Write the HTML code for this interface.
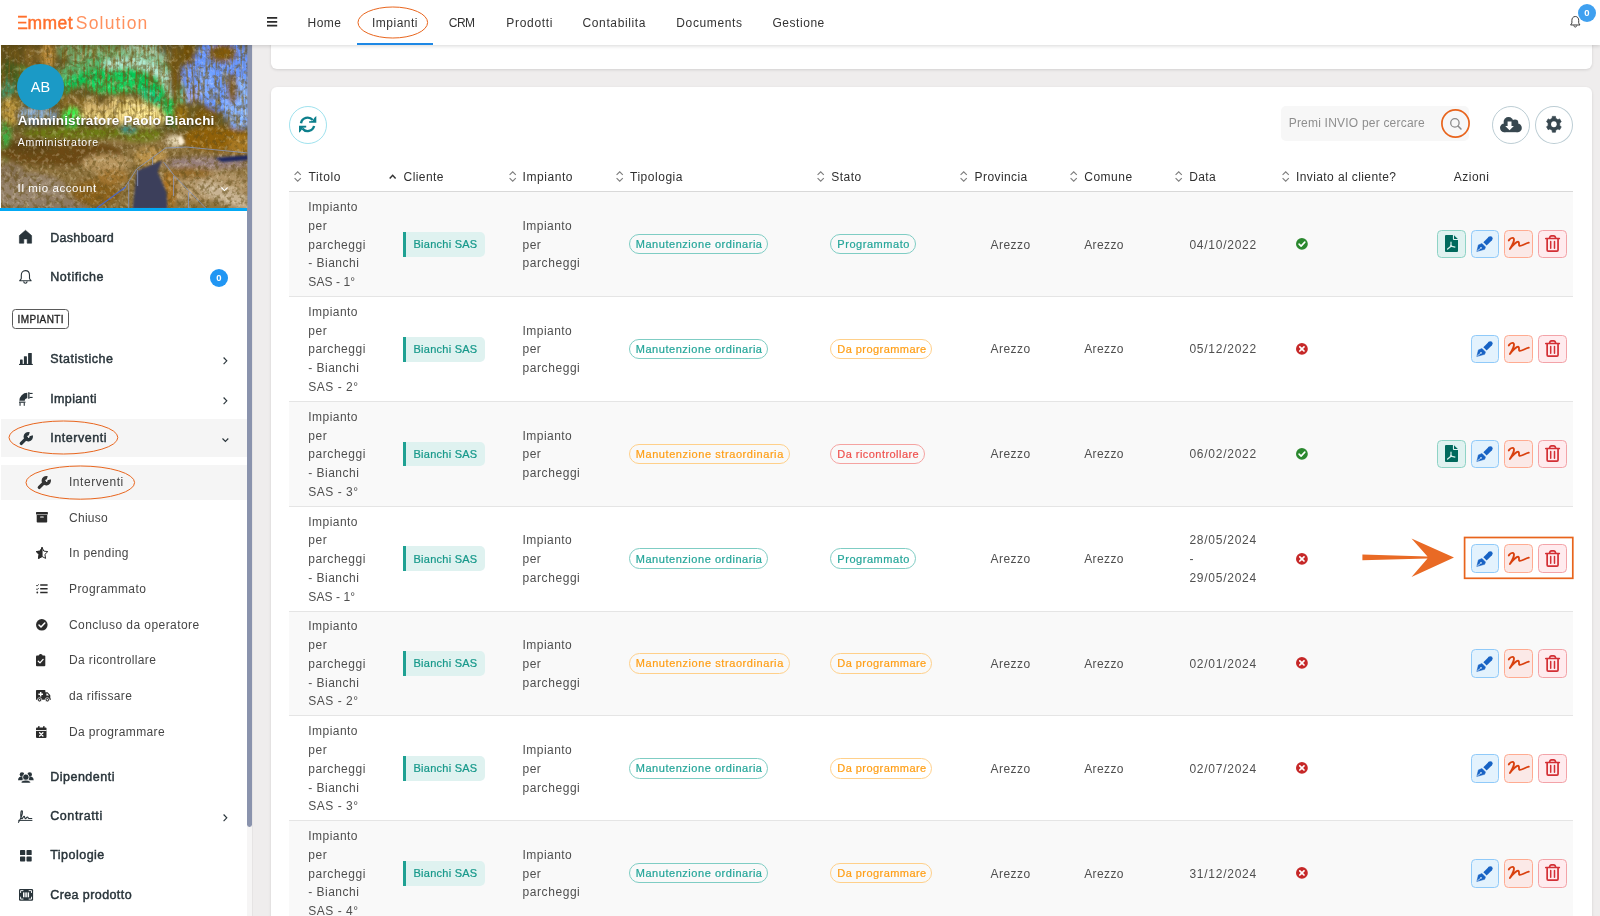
<!DOCTYPE html>
<html lang="it"><head><meta charset="utf-8"><title>Emmet Solution - Interventi</title>
<style>
html,body{margin:0;padding:0}
body{width:1600px;height:916px;overflow:hidden;position:relative;background:#efeded;font-family:"Liberation Sans", sans-serif;}
.t{position:absolute;white-space:nowrap;line-height:20px;height:20px;}
main,aside,header{display:block;will-change:transform;}
svg{position:absolute;overflow:visible}
.cave{filter:saturate(1.12) contrast(1.1) brightness(1.05)}
</style></head><body>
<main>
<div style="position:absolute;left:270.6px;top:30px;width:1321px;height:38.6px;background:#fff;border-radius:6px;box-shadow:0 1px 3px rgba(0,0,0,.12);"></div>
<div style="position:absolute;left:270.6px;top:86.8px;width:1321px;height:860px;background:#fff;border-radius:6px;box-shadow:0 1px 3px rgba(0,0,0,.12);"></div>
<div style="position:absolute;left:289.0px;top:191px;width:1284.0px;height:1px;background:#d9d9d9;"></div>
<div style="position:absolute;left:289.0px;top:192px;width:1284.0px;height:104px;background:#f9f9f9;"></div>
<div style="position:absolute;left:289.0px;top:296px;width:1284.0px;height:1px;background:#e5e5e5;"></div>
<div style="position:absolute;left:289.0px;top:401px;width:1284.0px;height:1px;background:#e5e5e5;"></div>
<div style="position:absolute;left:289.0px;top:402px;width:1284.0px;height:104px;background:#f9f9f9;"></div>
<div style="position:absolute;left:289.0px;top:506px;width:1284.0px;height:1px;background:#e5e5e5;"></div>
<div style="position:absolute;left:289.0px;top:611px;width:1284.0px;height:1px;background:#e5e5e5;"></div>
<div style="position:absolute;left:289.0px;top:612px;width:1284.0px;height:103px;background:#f9f9f9;"></div>
<div style="position:absolute;left:289.0px;top:715px;width:1284.0px;height:1px;background:#e5e5e5;"></div>
<div style="position:absolute;left:289.0px;top:820px;width:1284.0px;height:1px;background:#e5e5e5;"></div>
<div style="position:absolute;left:289.0px;top:821px;width:1284.0px;height:104px;background:#f9f9f9;"></div>
<div style="position:absolute;left:289.0px;top:925px;width:1284.0px;height:1px;background:#e5e5e5;"></div>
<div style="position:absolute;left:289.0px;top:105.9px;width:37.9px;height:37.9px;border:1px solid #9fe2ee;border-radius:50%;box-sizing:border-box;background:#fff;"></div>
<svg style="left:299.30px;top:116.10px" width="17.30" height="16.80" viewBox="0 0 17.3 16.8" preserveAspectRatio="none" ><path d="M2.0 7.24 A6.7 6.7 0 0 1 13.73 4.09" fill="none" stroke="#0d7f8c" stroke-width="2.4"/><path d="M17.3 0 V6.8 H10.1 V5.2 L13.4 4.9 L15.6 1.5 Z" fill="#0d7f8c"/><path d="M15.1 10.02 A6.7 6.7 0 0 1 3.35 12.56" fill="none" stroke="#0d7f8c" stroke-width="2.4"/><path d="M0 16.8 V9.8 H7.2 V11.4 L3.9 11.8 L1.7 15.3 Z" fill="#0d7f8c"/></svg>
<div style="position:absolute;left:1281.2px;top:105.9px;width:187.5px;height:34.7px;background:#f7f7f7;border-radius:5px;"></div>
<svg style="left:1440.00px;top:107.70px" width="31.00" height="31.00" viewBox="0 0 31 31" preserveAspectRatio="none" ><circle cx="15.5" cy="15.5" r="13.6" fill="none" stroke="#e8641c" stroke-width="1.7"/></svg>
<svg style="left:1449.80px;top:117.60px" width="11.60" height="11.70" viewBox="0 0 11.6 11.7" preserveAspectRatio="none" ><circle cx="4.9" cy="4.9" r="4.2" fill="none" stroke="#8a8a8a" stroke-width="1.3"/><path d="M8 8.1 L11 11.1" stroke="#8a8a8a" stroke-width="1.5" stroke-linecap="round"/></svg>
<div style="position:absolute;left:1492.0px;top:105.9px;width:37.9px;height:37.9px;border:1px solid #bccdd4;border-radius:50%;box-sizing:border-box;background:#fff;"></div>
<svg style="left:1500.40px;top:116.90px" width="21.80" height="15.20" viewBox="0 0 21.8 15.2" preserveAspectRatio="none" ><g fill="#37474f"><circle cx="8.5" cy="4.9" r="4.9"/><circle cx="15.0" cy="5.9" r="3.3"/><circle cx="4.4" cy="10.8" r="4.4"/><circle cx="17.5" cy="10.9" r="4.3"/><rect x="4.4" y="5.5" width="13.1" height="9.7"/></g><path d="M7.6 4.4 H11.5 V9.0 H13.9 L9.55 13.3 L5.2 9.0 H7.6 Z" fill="#fff"/></svg>
<div style="position:absolute;left:1535.2px;top:105.9px;width:37.8px;height:37.9px;border:1px solid #bccdd4;border-radius:50%;box-sizing:border-box;background:#fff;"></div>
<svg style="left:1546.20px;top:116.30px" width="15.80" height="16.60" viewBox="0 0 16.6 16.6" preserveAspectRatio="none" ><path d="M6.62 0.38 L9.98 0.38 L10.17 2.34 L12.53 3.70 L14.32 2.88 L16.00 5.80 L14.40 6.94 L14.40 9.66 L16.00 10.80 L14.32 13.72 L12.53 12.90 L10.17 14.26 L9.98 16.22 L6.62 16.22 L6.43 14.26 L4.07 12.90 L2.28 13.72 L0.60 10.80 L2.20 9.66 L2.20 6.94 L0.60 5.80 L2.28 2.88 L4.07 3.70 L6.43 2.34 Z" fill="#37474f" stroke="#37474f" stroke-width=".7" stroke-linejoin="round"/><circle cx="8.3" cy="8.3" r="2.95" fill="#fff"/></svg>
<svg style="left:294.40px;top:171.40px" width="7.40" height="11.00" viewBox="0 0 7.4 11" preserveAspectRatio="none" ><path d="M0.6 3.9 L3.7 0.8 L6.8 3.9 M0.6 7.1 L3.7 10.2 L6.8 7.1" fill="none" stroke="#7d7d7d" stroke-width="1.1"/></svg>
<svg style="left:508.80px;top:171.40px" width="7.40" height="11.00" viewBox="0 0 7.4 11" preserveAspectRatio="none" ><path d="M0.6 3.9 L3.7 0.8 L6.8 3.9 M0.6 7.1 L3.7 10.2 L6.8 7.1" fill="none" stroke="#7d7d7d" stroke-width="1.1"/></svg>
<svg style="left:615.60px;top:171.40px" width="7.40" height="11.00" viewBox="0 0 7.4 11" preserveAspectRatio="none" ><path d="M0.6 3.9 L3.7 0.8 L6.8 3.9 M0.6 7.1 L3.7 10.2 L6.8 7.1" fill="none" stroke="#7d7d7d" stroke-width="1.1"/></svg>
<svg style="left:816.80px;top:171.40px" width="7.40" height="11.00" viewBox="0 0 7.4 11" preserveAspectRatio="none" ><path d="M0.6 3.9 L3.7 0.8 L6.8 3.9 M0.6 7.1 L3.7 10.2 L6.8 7.1" fill="none" stroke="#7d7d7d" stroke-width="1.1"/></svg>
<svg style="left:960.20px;top:171.40px" width="7.40" height="11.00" viewBox="0 0 7.4 11" preserveAspectRatio="none" ><path d="M0.6 3.9 L3.7 0.8 L6.8 3.9 M0.6 7.1 L3.7 10.2 L6.8 7.1" fill="none" stroke="#7d7d7d" stroke-width="1.1"/></svg>
<svg style="left:1070.00px;top:171.40px" width="7.40" height="11.00" viewBox="0 0 7.4 11" preserveAspectRatio="none" ><path d="M0.6 3.9 L3.7 0.8 L6.8 3.9 M0.6 7.1 L3.7 10.2 L6.8 7.1" fill="none" stroke="#7d7d7d" stroke-width="1.1"/></svg>
<svg style="left:1175.40px;top:171.40px" width="7.40" height="11.00" viewBox="0 0 7.4 11" preserveAspectRatio="none" ><path d="M0.6 3.9 L3.7 0.8 L6.8 3.9 M0.6 7.1 L3.7 10.2 L6.8 7.1" fill="none" stroke="#7d7d7d" stroke-width="1.1"/></svg>
<svg style="left:1282.00px;top:171.40px" width="7.40" height="11.00" viewBox="0 0 7.4 11" preserveAspectRatio="none" ><path d="M0.6 3.9 L3.7 0.8 L6.8 3.9 M0.6 7.1 L3.7 10.2 L6.8 7.1" fill="none" stroke="#7d7d7d" stroke-width="1.1"/></svg>
<svg style="left:389.30px;top:174.20px" width="7.30" height="5.20" viewBox="0 0 7.3 5.2" preserveAspectRatio="none" ><path d="M0.7 4.5 L3.65 1.3 L6.6 4.5" fill="none" stroke="#333" stroke-width="1.5"/></svg>
<div style="position:absolute;left:403px;top:231.89999999999998px;width:82px;height:24.8px;background:#dff2f0;border-left:3px solid #1fa193;border-radius:0 5px 5px 0;box-sizing:border-box;"></div>
<div style="position:absolute;left:628.75px;top:233.79999999999998px;width:139.5px;height:20.5px;border:1px solid #7fcdc4;border-radius:11px;box-sizing:border-box;"></div>
<div style="position:absolute;left:830.3px;top:233.79999999999998px;width:85.70000000000005px;height:20.5px;border:1px solid #7fcdc4;border-radius:11px;box-sizing:border-box;"></div>
<svg style="left:1295.90px;top:237.80px" width="11.80" height="11.80" viewBox="0 0 11.8 11.8" preserveAspectRatio="none" ><circle cx="5.9" cy="5.9" r="5.9" fill="#2b882f"/><path d="M3.1 6.1 L5.1 8.1 L8.8 4.1" stroke="#fff" stroke-width="1.6" fill="none" stroke-linecap="round" stroke-linejoin="round"/></svg>
<div style="position:absolute;left:1437.0px;top:229.89999999999998px;width:28.7px;height:28.5px;background:#e0f2f0;border:1px solid #8fd3c6;border-radius:4.5px;box-sizing:border-box;"></div>
<svg style="left:1445.00px;top:235.20px" width="13.00" height="16.90" viewBox="0 0 13 16.9" preserveAspectRatio="none" ><path d="M1 0 H7.9 V4.1 Q7.9 5.1 8.9 5.1 H13 V15.9 Q13 16.9 12 16.9 H1 Q0 16.9 0 15.9 V1 Q0 0 1 0 Z" fill="#00695c"/><path d="M9 0.2 L12.8 4 H9.6 Q9 4 9 3.4 Z" fill="#00695c"/><path d="M6 7.2 V10.6 M6 11.2 L2.6 14 M6 11.2 L9.9 12.2" fill="none" stroke="#d6eeea" stroke-width="1.25" stroke-linecap="round"/><circle cx="6" cy="11.1" r="1.1" fill="#d6eeea"/></svg>
<div style="position:absolute;left:1470.6px;top:229.89999999999998px;width:28.7px;height:28.5px;background:#e3f2fd;border:1px solid #90caf9;border-radius:4.5px;box-sizing:border-box;"></div>
<svg style="left:1477.00px;top:235.40px" width="17.00" height="17.00" viewBox="0 0 17 17" preserveAspectRatio="none" ><path d="M8.0 8.9 L13.3 3.6" stroke="#1863c4" stroke-width="4.7" fill="none"/><circle cx="13.3" cy="3.6" r="2.35" fill="#1863c4"/><path d="M5.0 8.5 L8.5 12.0 L7.7 14.3 L-0.2 16.5 L1.4 9.9 Z" fill="#1863c4" stroke="#1863c4" stroke-width=".5" stroke-linejoin="round"/><path d="M0.3 15.9 L3.6 13.3" stroke="#e3f2fd" stroke-width=".8"/><circle cx="4.0" cy="12.9" r="0.8" fill="#e3f2fd"/></svg>
<div style="position:absolute;left:1504.3px;top:229.89999999999998px;width:28.7px;height:28.5px;background:#fbe9e7;border:1px solid #ffab91;border-radius:4.5px;box-sizing:border-box;"></div>
<svg style="left:1508.00px;top:237.00px" width="22.00" height="13.00" viewBox="0 0 22 13" preserveAspectRatio="none" ><path d="M0.8 3.4 C2 1.6 4.2 0.6 5.4 1.2 C7.2 2.4 4.4 8.4 1.9 12 C4.6 8 9 4.2 10.4 4.9 C11.8 5.6 10.2 8.4 11.6 8.8 C13.6 9.2 17 6.6 20.8 5.7" fill="none" stroke="#d9410f" stroke-width="1.9" stroke-linecap="round" stroke-linejoin="round"/></svg>
<div style="position:absolute;left:1538.0px;top:229.89999999999998px;width:28.7px;height:28.5px;background:#ffebee;border:1px solid #f3a3a8;border-radius:4.5px;box-sizing:border-box;"></div>
<svg style="left:1544.90px;top:235.20px" width="15.00" height="17.00" viewBox="0 0 15 17" preserveAspectRatio="none" ><path d="M0.8 3.5 H14.3" stroke="#d32f35" stroke-width="1.7" stroke-linecap="round"/><path d="M4.5 3.2 Q4.9 0.85 6.5 0.85 H8.7 Q10.3 0.85 10.7 3.2" fill="none" stroke="#d32f35" stroke-width="1.6"/><path d="M2.15 4 V15 Q2.15 16.05 3.2 16.05 H12.0 Q13.05 16.05 13.05 15 V4" fill="none" stroke="#d32f35" stroke-width="1.7"/><path d="M5.7 6.4 V13.2 M9.5 6.4 V13.2" stroke="#d32f35" stroke-width="1.5" stroke-linecap="round"/></svg>
<div style="position:absolute;left:403px;top:336.74999999999994px;width:82px;height:24.8px;background:#dff2f0;border-left:3px solid #1fa193;border-radius:0 5px 5px 0;box-sizing:border-box;"></div>
<div style="position:absolute;left:628.75px;top:338.65px;width:139.5px;height:20.5px;border:1px solid #7fcdc4;border-radius:11px;box-sizing:border-box;"></div>
<div style="position:absolute;left:830.3px;top:338.65px;width:102.20000000000005px;height:20.5px;border:1px solid #ffd08a;border-radius:11px;box-sizing:border-box;"></div>
<svg style="left:1295.90px;top:342.85px" width="11.80" height="11.80" viewBox="0 0 11.8 11.8" preserveAspectRatio="none" ><circle cx="5.9" cy="5.9" r="5.9" fill="#c62828"/><path d="M3.8 3.8 L8 8 M8 3.8 L3.8 8" stroke="#fff" stroke-width="1.7" fill="none" stroke-linecap="round"/></svg>
<div style="position:absolute;left:1470.6px;top:334.74999999999994px;width:28.7px;height:28.5px;background:#e3f2fd;border:1px solid #90caf9;border-radius:4.5px;box-sizing:border-box;"></div>
<svg style="left:1477.00px;top:340.25px" width="17.00" height="17.00" viewBox="0 0 17 17" preserveAspectRatio="none" ><path d="M8.0 8.9 L13.3 3.6" stroke="#1863c4" stroke-width="4.7" fill="none"/><circle cx="13.3" cy="3.6" r="2.35" fill="#1863c4"/><path d="M5.0 8.5 L8.5 12.0 L7.7 14.3 L-0.2 16.5 L1.4 9.9 Z" fill="#1863c4" stroke="#1863c4" stroke-width=".5" stroke-linejoin="round"/><path d="M0.3 15.9 L3.6 13.3" stroke="#e3f2fd" stroke-width=".8"/><circle cx="4.0" cy="12.9" r="0.8" fill="#e3f2fd"/></svg>
<div style="position:absolute;left:1504.3px;top:334.74999999999994px;width:28.7px;height:28.5px;background:#fbe9e7;border:1px solid #ffab91;border-radius:4.5px;box-sizing:border-box;"></div>
<svg style="left:1508.00px;top:341.85px" width="22.00" height="13.00" viewBox="0 0 22 13" preserveAspectRatio="none" ><path d="M0.8 3.4 C2 1.6 4.2 0.6 5.4 1.2 C7.2 2.4 4.4 8.4 1.9 12 C4.6 8 9 4.2 10.4 4.9 C11.8 5.6 10.2 8.4 11.6 8.8 C13.6 9.2 17 6.6 20.8 5.7" fill="none" stroke="#d9410f" stroke-width="1.9" stroke-linecap="round" stroke-linejoin="round"/></svg>
<div style="position:absolute;left:1538.0px;top:334.74999999999994px;width:28.7px;height:28.5px;background:#ffebee;border:1px solid #f3a3a8;border-radius:4.5px;box-sizing:border-box;"></div>
<svg style="left:1544.90px;top:340.05px" width="15.00" height="17.00" viewBox="0 0 15 17" preserveAspectRatio="none" ><path d="M0.8 3.5 H14.3" stroke="#d32f35" stroke-width="1.7" stroke-linecap="round"/><path d="M4.5 3.2 Q4.9 0.85 6.5 0.85 H8.7 Q10.3 0.85 10.7 3.2" fill="none" stroke="#d32f35" stroke-width="1.6"/><path d="M2.15 4 V15 Q2.15 16.05 3.2 16.05 H12.0 Q13.05 16.05 13.05 15 V4" fill="none" stroke="#d32f35" stroke-width="1.7"/><path d="M5.7 6.4 V13.2 M9.5 6.4 V13.2" stroke="#d32f35" stroke-width="1.5" stroke-linecap="round"/></svg>
<div style="position:absolute;left:403px;top:441.59999999999997px;width:82px;height:24.8px;background:#dff2f0;border-left:3px solid #1fa193;border-radius:0 5px 5px 0;box-sizing:border-box;"></div>
<div style="position:absolute;left:628.75px;top:443.5px;width:160.75px;height:20.5px;border:1px solid #ffd08a;border-radius:11px;box-sizing:border-box;"></div>
<div style="position:absolute;left:830.3px;top:443.5px;width:95.20000000000005px;height:20.5px;border:1px solid #f5a3a1;border-radius:11px;box-sizing:border-box;"></div>
<svg style="left:1295.90px;top:447.50px" width="11.80" height="11.80" viewBox="0 0 11.8 11.8" preserveAspectRatio="none" ><circle cx="5.9" cy="5.9" r="5.9" fill="#2b882f"/><path d="M3.1 6.1 L5.1 8.1 L8.8 4.1" stroke="#fff" stroke-width="1.6" fill="none" stroke-linecap="round" stroke-linejoin="round"/></svg>
<div style="position:absolute;left:1437.0px;top:439.59999999999997px;width:28.7px;height:28.5px;background:#e0f2f0;border:1px solid #8fd3c6;border-radius:4.5px;box-sizing:border-box;"></div>
<svg style="left:1445.00px;top:444.90px" width="13.00" height="16.90" viewBox="0 0 13 16.9" preserveAspectRatio="none" ><path d="M1 0 H7.9 V4.1 Q7.9 5.1 8.9 5.1 H13 V15.9 Q13 16.9 12 16.9 H1 Q0 16.9 0 15.9 V1 Q0 0 1 0 Z" fill="#00695c"/><path d="M9 0.2 L12.8 4 H9.6 Q9 4 9 3.4 Z" fill="#00695c"/><path d="M6 7.2 V10.6 M6 11.2 L2.6 14 M6 11.2 L9.9 12.2" fill="none" stroke="#d6eeea" stroke-width="1.25" stroke-linecap="round"/><circle cx="6" cy="11.1" r="1.1" fill="#d6eeea"/></svg>
<div style="position:absolute;left:1470.6px;top:439.59999999999997px;width:28.7px;height:28.5px;background:#e3f2fd;border:1px solid #90caf9;border-radius:4.5px;box-sizing:border-box;"></div>
<svg style="left:1477.00px;top:445.10px" width="17.00" height="17.00" viewBox="0 0 17 17" preserveAspectRatio="none" ><path d="M8.0 8.9 L13.3 3.6" stroke="#1863c4" stroke-width="4.7" fill="none"/><circle cx="13.3" cy="3.6" r="2.35" fill="#1863c4"/><path d="M5.0 8.5 L8.5 12.0 L7.7 14.3 L-0.2 16.5 L1.4 9.9 Z" fill="#1863c4" stroke="#1863c4" stroke-width=".5" stroke-linejoin="round"/><path d="M0.3 15.9 L3.6 13.3" stroke="#e3f2fd" stroke-width=".8"/><circle cx="4.0" cy="12.9" r="0.8" fill="#e3f2fd"/></svg>
<div style="position:absolute;left:1504.3px;top:439.59999999999997px;width:28.7px;height:28.5px;background:#fbe9e7;border:1px solid #ffab91;border-radius:4.5px;box-sizing:border-box;"></div>
<svg style="left:1508.00px;top:446.70px" width="22.00" height="13.00" viewBox="0 0 22 13" preserveAspectRatio="none" ><path d="M0.8 3.4 C2 1.6 4.2 0.6 5.4 1.2 C7.2 2.4 4.4 8.4 1.9 12 C4.6 8 9 4.2 10.4 4.9 C11.8 5.6 10.2 8.4 11.6 8.8 C13.6 9.2 17 6.6 20.8 5.7" fill="none" stroke="#d9410f" stroke-width="1.9" stroke-linecap="round" stroke-linejoin="round"/></svg>
<div style="position:absolute;left:1538.0px;top:439.59999999999997px;width:28.7px;height:28.5px;background:#ffebee;border:1px solid #f3a3a8;border-radius:4.5px;box-sizing:border-box;"></div>
<svg style="left:1544.90px;top:444.90px" width="15.00" height="17.00" viewBox="0 0 15 17" preserveAspectRatio="none" ><path d="M0.8 3.5 H14.3" stroke="#d32f35" stroke-width="1.7" stroke-linecap="round"/><path d="M4.5 3.2 Q4.9 0.85 6.5 0.85 H8.7 Q10.3 0.85 10.7 3.2" fill="none" stroke="#d32f35" stroke-width="1.6"/><path d="M2.15 4 V15 Q2.15 16.05 3.2 16.05 H12.0 Q13.05 16.05 13.05 15 V4" fill="none" stroke="#d32f35" stroke-width="1.7"/><path d="M5.7 6.4 V13.2 M9.5 6.4 V13.2" stroke="#d32f35" stroke-width="1.5" stroke-linecap="round"/></svg>
<div style="position:absolute;left:403px;top:546.45px;width:82px;height:24.8px;background:#dff2f0;border-left:3px solid #1fa193;border-radius:0 5px 5px 0;box-sizing:border-box;"></div>
<div style="position:absolute;left:628.75px;top:548.35px;width:139.5px;height:20.5px;border:1px solid #7fcdc4;border-radius:11px;box-sizing:border-box;"></div>
<div style="position:absolute;left:830.3px;top:548.35px;width:85.70000000000005px;height:20.5px;border:1px solid #7fcdc4;border-radius:11px;box-sizing:border-box;"></div>
<svg style="left:1295.90px;top:552.55px" width="11.80" height="11.80" viewBox="0 0 11.8 11.8" preserveAspectRatio="none" ><circle cx="5.9" cy="5.9" r="5.9" fill="#c62828"/><path d="M3.8 3.8 L8 8 M8 3.8 L3.8 8" stroke="#fff" stroke-width="1.7" fill="none" stroke-linecap="round"/></svg>
<div style="position:absolute;left:1470.6px;top:544.45px;width:28.7px;height:28.5px;background:#e3f2fd;border:1px solid #90caf9;border-radius:4.5px;box-sizing:border-box;"></div>
<svg style="left:1477.00px;top:549.95px" width="17.00" height="17.00" viewBox="0 0 17 17" preserveAspectRatio="none" ><path d="M8.0 8.9 L13.3 3.6" stroke="#1863c4" stroke-width="4.7" fill="none"/><circle cx="13.3" cy="3.6" r="2.35" fill="#1863c4"/><path d="M5.0 8.5 L8.5 12.0 L7.7 14.3 L-0.2 16.5 L1.4 9.9 Z" fill="#1863c4" stroke="#1863c4" stroke-width=".5" stroke-linejoin="round"/><path d="M0.3 15.9 L3.6 13.3" stroke="#e3f2fd" stroke-width=".8"/><circle cx="4.0" cy="12.9" r="0.8" fill="#e3f2fd"/></svg>
<div style="position:absolute;left:1504.3px;top:544.45px;width:28.7px;height:28.5px;background:#fbe9e7;border:1px solid #ffab91;border-radius:4.5px;box-sizing:border-box;"></div>
<svg style="left:1508.00px;top:551.55px" width="22.00" height="13.00" viewBox="0 0 22 13" preserveAspectRatio="none" ><path d="M0.8 3.4 C2 1.6 4.2 0.6 5.4 1.2 C7.2 2.4 4.4 8.4 1.9 12 C4.6 8 9 4.2 10.4 4.9 C11.8 5.6 10.2 8.4 11.6 8.8 C13.6 9.2 17 6.6 20.8 5.7" fill="none" stroke="#d9410f" stroke-width="1.9" stroke-linecap="round" stroke-linejoin="round"/></svg>
<div style="position:absolute;left:1538.0px;top:544.45px;width:28.7px;height:28.5px;background:#ffebee;border:1px solid #f3a3a8;border-radius:4.5px;box-sizing:border-box;"></div>
<svg style="left:1544.90px;top:549.75px" width="15.00" height="17.00" viewBox="0 0 15 17" preserveAspectRatio="none" ><path d="M0.8 3.5 H14.3" stroke="#d32f35" stroke-width="1.7" stroke-linecap="round"/><path d="M4.5 3.2 Q4.9 0.85 6.5 0.85 H8.7 Q10.3 0.85 10.7 3.2" fill="none" stroke="#d32f35" stroke-width="1.6"/><path d="M2.15 4 V15 Q2.15 16.05 3.2 16.05 H12.0 Q13.05 16.05 13.05 15 V4" fill="none" stroke="#d32f35" stroke-width="1.7"/><path d="M5.7 6.4 V13.2 M9.5 6.4 V13.2" stroke="#d32f35" stroke-width="1.5" stroke-linecap="round"/></svg>
<div style="position:absolute;left:403px;top:651.3px;width:82px;height:24.8px;background:#dff2f0;border-left:3px solid #1fa193;border-radius:0 5px 5px 0;box-sizing:border-box;"></div>
<div style="position:absolute;left:628.75px;top:653.1999999999999px;width:160.75px;height:20.5px;border:1px solid #ffd08a;border-radius:11px;box-sizing:border-box;"></div>
<div style="position:absolute;left:830.3px;top:653.1999999999999px;width:102.20000000000005px;height:20.5px;border:1px solid #ffd08a;border-radius:11px;box-sizing:border-box;"></div>
<svg style="left:1295.90px;top:657.40px" width="11.80" height="11.80" viewBox="0 0 11.8 11.8" preserveAspectRatio="none" ><circle cx="5.9" cy="5.9" r="5.9" fill="#c62828"/><path d="M3.8 3.8 L8 8 M8 3.8 L3.8 8" stroke="#fff" stroke-width="1.7" fill="none" stroke-linecap="round"/></svg>
<div style="position:absolute;left:1470.6px;top:649.3px;width:28.7px;height:28.5px;background:#e3f2fd;border:1px solid #90caf9;border-radius:4.5px;box-sizing:border-box;"></div>
<svg style="left:1477.00px;top:654.80px" width="17.00" height="17.00" viewBox="0 0 17 17" preserveAspectRatio="none" ><path d="M8.0 8.9 L13.3 3.6" stroke="#1863c4" stroke-width="4.7" fill="none"/><circle cx="13.3" cy="3.6" r="2.35" fill="#1863c4"/><path d="M5.0 8.5 L8.5 12.0 L7.7 14.3 L-0.2 16.5 L1.4 9.9 Z" fill="#1863c4" stroke="#1863c4" stroke-width=".5" stroke-linejoin="round"/><path d="M0.3 15.9 L3.6 13.3" stroke="#e3f2fd" stroke-width=".8"/><circle cx="4.0" cy="12.9" r="0.8" fill="#e3f2fd"/></svg>
<div style="position:absolute;left:1504.3px;top:649.3px;width:28.7px;height:28.5px;background:#fbe9e7;border:1px solid #ffab91;border-radius:4.5px;box-sizing:border-box;"></div>
<svg style="left:1508.00px;top:656.40px" width="22.00" height="13.00" viewBox="0 0 22 13" preserveAspectRatio="none" ><path d="M0.8 3.4 C2 1.6 4.2 0.6 5.4 1.2 C7.2 2.4 4.4 8.4 1.9 12 C4.6 8 9 4.2 10.4 4.9 C11.8 5.6 10.2 8.4 11.6 8.8 C13.6 9.2 17 6.6 20.8 5.7" fill="none" stroke="#d9410f" stroke-width="1.9" stroke-linecap="round" stroke-linejoin="round"/></svg>
<div style="position:absolute;left:1538.0px;top:649.3px;width:28.7px;height:28.5px;background:#ffebee;border:1px solid #f3a3a8;border-radius:4.5px;box-sizing:border-box;"></div>
<svg style="left:1544.90px;top:654.60px" width="15.00" height="17.00" viewBox="0 0 15 17" preserveAspectRatio="none" ><path d="M0.8 3.5 H14.3" stroke="#d32f35" stroke-width="1.7" stroke-linecap="round"/><path d="M4.5 3.2 Q4.9 0.85 6.5 0.85 H8.7 Q10.3 0.85 10.7 3.2" fill="none" stroke="#d32f35" stroke-width="1.6"/><path d="M2.15 4 V15 Q2.15 16.05 3.2 16.05 H12.0 Q13.05 16.05 13.05 15 V4" fill="none" stroke="#d32f35" stroke-width="1.7"/><path d="M5.7 6.4 V13.2 M9.5 6.4 V13.2" stroke="#d32f35" stroke-width="1.5" stroke-linecap="round"/></svg>
<div style="position:absolute;left:403px;top:756.1500000000001px;width:82px;height:24.8px;background:#dff2f0;border-left:3px solid #1fa193;border-radius:0 5px 5px 0;box-sizing:border-box;"></div>
<div style="position:absolute;left:628.75px;top:758.0500000000001px;width:139.5px;height:20.5px;border:1px solid #7fcdc4;border-radius:11px;box-sizing:border-box;"></div>
<div style="position:absolute;left:830.3px;top:758.0500000000001px;width:102.20000000000005px;height:20.5px;border:1px solid #ffd08a;border-radius:11px;box-sizing:border-box;"></div>
<svg style="left:1295.90px;top:762.25px" width="11.80" height="11.80" viewBox="0 0 11.8 11.8" preserveAspectRatio="none" ><circle cx="5.9" cy="5.9" r="5.9" fill="#c62828"/><path d="M3.8 3.8 L8 8 M8 3.8 L3.8 8" stroke="#fff" stroke-width="1.7" fill="none" stroke-linecap="round"/></svg>
<div style="position:absolute;left:1470.6px;top:754.1500000000001px;width:28.7px;height:28.5px;background:#e3f2fd;border:1px solid #90caf9;border-radius:4.5px;box-sizing:border-box;"></div>
<svg style="left:1477.00px;top:759.65px" width="17.00" height="17.00" viewBox="0 0 17 17" preserveAspectRatio="none" ><path d="M8.0 8.9 L13.3 3.6" stroke="#1863c4" stroke-width="4.7" fill="none"/><circle cx="13.3" cy="3.6" r="2.35" fill="#1863c4"/><path d="M5.0 8.5 L8.5 12.0 L7.7 14.3 L-0.2 16.5 L1.4 9.9 Z" fill="#1863c4" stroke="#1863c4" stroke-width=".5" stroke-linejoin="round"/><path d="M0.3 15.9 L3.6 13.3" stroke="#e3f2fd" stroke-width=".8"/><circle cx="4.0" cy="12.9" r="0.8" fill="#e3f2fd"/></svg>
<div style="position:absolute;left:1504.3px;top:754.1500000000001px;width:28.7px;height:28.5px;background:#fbe9e7;border:1px solid #ffab91;border-radius:4.5px;box-sizing:border-box;"></div>
<svg style="left:1508.00px;top:761.25px" width="22.00" height="13.00" viewBox="0 0 22 13" preserveAspectRatio="none" ><path d="M0.8 3.4 C2 1.6 4.2 0.6 5.4 1.2 C7.2 2.4 4.4 8.4 1.9 12 C4.6 8 9 4.2 10.4 4.9 C11.8 5.6 10.2 8.4 11.6 8.8 C13.6 9.2 17 6.6 20.8 5.7" fill="none" stroke="#d9410f" stroke-width="1.9" stroke-linecap="round" stroke-linejoin="round"/></svg>
<div style="position:absolute;left:1538.0px;top:754.1500000000001px;width:28.7px;height:28.5px;background:#ffebee;border:1px solid #f3a3a8;border-radius:4.5px;box-sizing:border-box;"></div>
<svg style="left:1544.90px;top:759.45px" width="15.00" height="17.00" viewBox="0 0 15 17" preserveAspectRatio="none" ><path d="M0.8 3.5 H14.3" stroke="#d32f35" stroke-width="1.7" stroke-linecap="round"/><path d="M4.5 3.2 Q4.9 0.85 6.5 0.85 H8.7 Q10.3 0.85 10.7 3.2" fill="none" stroke="#d32f35" stroke-width="1.6"/><path d="M2.15 4 V15 Q2.15 16.05 3.2 16.05 H12.0 Q13.05 16.05 13.05 15 V4" fill="none" stroke="#d32f35" stroke-width="1.7"/><path d="M5.7 6.4 V13.2 M9.5 6.4 V13.2" stroke="#d32f35" stroke-width="1.5" stroke-linecap="round"/></svg>
<div style="position:absolute;left:403px;top:861.0px;width:82px;height:24.8px;background:#dff2f0;border-left:3px solid #1fa193;border-radius:0 5px 5px 0;box-sizing:border-box;"></div>
<div style="position:absolute;left:628.75px;top:862.9px;width:139.5px;height:20.5px;border:1px solid #7fcdc4;border-radius:11px;box-sizing:border-box;"></div>
<div style="position:absolute;left:830.3px;top:862.9px;width:102.20000000000005px;height:20.5px;border:1px solid #ffd08a;border-radius:11px;box-sizing:border-box;"></div>
<svg style="left:1295.90px;top:867.10px" width="11.80" height="11.80" viewBox="0 0 11.8 11.8" preserveAspectRatio="none" ><circle cx="5.9" cy="5.9" r="5.9" fill="#c62828"/><path d="M3.8 3.8 L8 8 M8 3.8 L3.8 8" stroke="#fff" stroke-width="1.7" fill="none" stroke-linecap="round"/></svg>
<div style="position:absolute;left:1470.6px;top:859.0px;width:28.7px;height:28.5px;background:#e3f2fd;border:1px solid #90caf9;border-radius:4.5px;box-sizing:border-box;"></div>
<svg style="left:1477.00px;top:864.50px" width="17.00" height="17.00" viewBox="0 0 17 17" preserveAspectRatio="none" ><path d="M8.0 8.9 L13.3 3.6" stroke="#1863c4" stroke-width="4.7" fill="none"/><circle cx="13.3" cy="3.6" r="2.35" fill="#1863c4"/><path d="M5.0 8.5 L8.5 12.0 L7.7 14.3 L-0.2 16.5 L1.4 9.9 Z" fill="#1863c4" stroke="#1863c4" stroke-width=".5" stroke-linejoin="round"/><path d="M0.3 15.9 L3.6 13.3" stroke="#e3f2fd" stroke-width=".8"/><circle cx="4.0" cy="12.9" r="0.8" fill="#e3f2fd"/></svg>
<div style="position:absolute;left:1504.3px;top:859.0px;width:28.7px;height:28.5px;background:#fbe9e7;border:1px solid #ffab91;border-radius:4.5px;box-sizing:border-box;"></div>
<svg style="left:1508.00px;top:866.10px" width="22.00" height="13.00" viewBox="0 0 22 13" preserveAspectRatio="none" ><path d="M0.8 3.4 C2 1.6 4.2 0.6 5.4 1.2 C7.2 2.4 4.4 8.4 1.9 12 C4.6 8 9 4.2 10.4 4.9 C11.8 5.6 10.2 8.4 11.6 8.8 C13.6 9.2 17 6.6 20.8 5.7" fill="none" stroke="#d9410f" stroke-width="1.9" stroke-linecap="round" stroke-linejoin="round"/></svg>
<div style="position:absolute;left:1538.0px;top:859.0px;width:28.7px;height:28.5px;background:#ffebee;border:1px solid #f3a3a8;border-radius:4.5px;box-sizing:border-box;"></div>
<svg style="left:1544.90px;top:864.30px" width="15.00" height="17.00" viewBox="0 0 15 17" preserveAspectRatio="none" ><path d="M0.8 3.5 H14.3" stroke="#d32f35" stroke-width="1.7" stroke-linecap="round"/><path d="M4.5 3.2 Q4.9 0.85 6.5 0.85 H8.7 Q10.3 0.85 10.7 3.2" fill="none" stroke="#d32f35" stroke-width="1.6"/><path d="M2.15 4 V15 Q2.15 16.05 3.2 16.05 H12.0 Q13.05 16.05 13.05 15 V4" fill="none" stroke="#d32f35" stroke-width="1.7"/><path d="M5.7 6.4 V13.2 M9.5 6.4 V13.2" stroke="#d32f35" stroke-width="1.5" stroke-linecap="round"/></svg>
<svg style="left:1463.40px;top:535.50px" width="111.20" height="43.80" viewBox="0 0 111.2 43.8" preserveAspectRatio="none" ><rect x="1.6" y="1.5" width="108.2" height="40.8" fill="none" stroke="#e8641c" stroke-width="1.7"/></svg>
<svg style="left:1360.00px;top:536.00px" width="96.00" height="44.00" viewBox="0 0 96 44" preserveAspectRatio="none" ><path d="M2.4 18.6 L67.5 20.4 L51.5 2.4 L94 21.4 L51.5 41 L67.5 22.6 L2.4 24.2 Z" fill="#e96a25"/></svg>
<span class="t" style="left:1288.70px;top:113.04px;font-size:12px;color:#8e8e8e;letter-spacing:0.210px;">Premi INVIO per cercare</span>
<span class="t" style="left:308.50px;top:166.84px;font-size:12px;color:#2f2f2f;letter-spacing:0.599px;">Titolo</span>
<span class="t" style="left:403.60px;top:166.84px;font-size:12px;color:#2f2f2f;letter-spacing:0.423px;">Cliente</span>
<span class="t" style="left:522.50px;top:166.84px;font-size:12px;color:#2f2f2f;letter-spacing:0.567px;">Impianto</span>
<span class="t" style="left:630.00px;top:166.84px;font-size:12px;color:#2f2f2f;letter-spacing:0.529px;">Tipologia</span>
<span class="t" style="left:831.20px;top:166.84px;font-size:12px;color:#2f2f2f;letter-spacing:0.517px;">Stato</span>
<span class="t" style="left:974.60px;top:166.84px;font-size:12px;color:#2f2f2f;letter-spacing:0.405px;">Provincia</span>
<span class="t" style="left:1084.20px;top:166.84px;font-size:12px;color:#2f2f2f;letter-spacing:0.528px;">Comune</span>
<span class="t" style="left:1189.20px;top:166.84px;font-size:12px;color:#2f2f2f;letter-spacing:0.380px;">Data</span>
<span class="t" style="left:1296.00px;top:166.84px;font-size:12px;color:#2f2f2f;letter-spacing:0.404px;">Inviato al cliente?</span>
<span class="t" style="left:1453.80px;top:166.84px;font-size:12px;color:#2f2f2f;letter-spacing:0.483px;">Azioni</span>
<span class="t" style="left:308.30px;top:197.09px;font-size:12px;color:#4f4f4f;letter-spacing:0.453px;">Impianto</span>
<span class="t" style="left:308.30px;top:215.84px;font-size:12px;color:#4f4f4f;letter-spacing:0.505px;">per</span>
<span class="t" style="left:308.30px;top:234.59px;font-size:12px;color:#4f4f4f;letter-spacing:0.560px;">parcheggi</span>
<span class="t" style="left:308.30px;top:253.34px;font-size:12px;color:#4f4f4f;letter-spacing:0.477px;">- Bianchi</span>
<span class="t" style="left:308.30px;top:272.09px;font-size:12px;color:#4f4f4f;letter-spacing:0.078px;">SAS - 1°</span>
<span class="t" style="left:413.50px;top:234.04px;font-size:11px;color:#17998b;letter-spacing:0.254px;-webkit-text-stroke:0.22px #17998b;">Bianchi SAS</span>
<span class="t" style="left:522.50px;top:215.84px;font-size:12px;color:#4f4f4f;letter-spacing:0.460px;">Impianto</span>
<span class="t" style="left:522.50px;top:234.59px;font-size:12px;color:#4f4f4f;letter-spacing:0.505px;">per</span>
<span class="t" style="left:522.50px;top:253.34px;font-size:12px;color:#4f4f4f;letter-spacing:0.573px;">parcheggi</span>
<span class="t" style="left:635.75px;top:234.04px;font-size:11px;color:#26a69a;letter-spacing:0.537px;-webkit-text-stroke:0.22px #26a69a;">Manutenzione ordinaria</span>
<span class="t" style="left:837.30px;top:234.04px;font-size:11px;color:#26a69a;letter-spacing:0.546px;-webkit-text-stroke:0.22px #26a69a;">Programmato</span>
<span class="t" style="left:990.50px;top:234.59px;font-size:12px;color:#4f4f4f;letter-spacing:0.468px;">Arezzo</span>
<span class="t" style="left:1084.20px;top:234.59px;font-size:12px;color:#4f4f4f;letter-spacing:0.388px;">Arezzo</span>
<span class="t" style="left:1189.40px;top:234.59px;font-size:12px;color:#4f4f4f;letter-spacing:0.749px;">04/10/2022</span>
<span class="t" style="left:308.30px;top:301.94px;font-size:12px;color:#4f4f4f;letter-spacing:0.453px;">Impianto</span>
<span class="t" style="left:308.30px;top:320.69px;font-size:12px;color:#4f4f4f;letter-spacing:0.505px;">per</span>
<span class="t" style="left:308.30px;top:339.44px;font-size:12px;color:#4f4f4f;letter-spacing:0.560px;">parcheggi</span>
<span class="t" style="left:308.30px;top:358.19px;font-size:12px;color:#4f4f4f;letter-spacing:0.477px;">- Bianchi</span>
<span class="t" style="left:308.30px;top:376.94px;font-size:12px;color:#4f4f4f;letter-spacing:0.505px;">SAS - 2°</span>
<span class="t" style="left:413.50px;top:338.89px;font-size:11px;color:#17998b;letter-spacing:0.254px;-webkit-text-stroke:0.22px #17998b;">Bianchi SAS</span>
<span class="t" style="left:522.50px;top:320.69px;font-size:12px;color:#4f4f4f;letter-spacing:0.460px;">Impianto</span>
<span class="t" style="left:522.50px;top:339.44px;font-size:12px;color:#4f4f4f;letter-spacing:0.505px;">per</span>
<span class="t" style="left:522.50px;top:358.19px;font-size:12px;color:#4f4f4f;letter-spacing:0.573px;">parcheggi</span>
<span class="t" style="left:635.75px;top:338.89px;font-size:11px;color:#26a69a;letter-spacing:0.537px;-webkit-text-stroke:0.22px #26a69a;">Manutenzione ordinaria</span>
<span class="t" style="left:837.30px;top:338.89px;font-size:11px;color:#ff9f17;letter-spacing:0.443px;-webkit-text-stroke:0.22px #ff9f17;">Da programmare</span>
<span class="t" style="left:990.50px;top:339.44px;font-size:12px;color:#4f4f4f;letter-spacing:0.468px;">Arezzo</span>
<span class="t" style="left:1084.20px;top:339.44px;font-size:12px;color:#4f4f4f;letter-spacing:0.388px;">Arezzo</span>
<span class="t" style="left:1189.40px;top:339.44px;font-size:12px;color:#4f4f4f;letter-spacing:0.749px;">05/12/2022</span>
<span class="t" style="left:308.30px;top:406.79px;font-size:12px;color:#4f4f4f;letter-spacing:0.453px;">Impianto</span>
<span class="t" style="left:308.30px;top:425.54px;font-size:12px;color:#4f4f4f;letter-spacing:0.505px;">per</span>
<span class="t" style="left:308.30px;top:444.29px;font-size:12px;color:#4f4f4f;letter-spacing:0.560px;">parcheggi</span>
<span class="t" style="left:308.30px;top:463.04px;font-size:12px;color:#4f4f4f;letter-spacing:0.477px;">- Bianchi</span>
<span class="t" style="left:308.30px;top:481.79px;font-size:12px;color:#4f4f4f;letter-spacing:0.505px;">SAS - 3°</span>
<span class="t" style="left:413.50px;top:443.74px;font-size:11px;color:#17998b;letter-spacing:0.254px;-webkit-text-stroke:0.22px #17998b;">Bianchi SAS</span>
<span class="t" style="left:522.50px;top:425.54px;font-size:12px;color:#4f4f4f;letter-spacing:0.460px;">Impianto</span>
<span class="t" style="left:522.50px;top:444.29px;font-size:12px;color:#4f4f4f;letter-spacing:0.505px;">per</span>
<span class="t" style="left:522.50px;top:463.04px;font-size:12px;color:#4f4f4f;letter-spacing:0.573px;">parcheggi</span>
<span class="t" style="left:635.75px;top:443.74px;font-size:11px;color:#ff9f17;letter-spacing:0.568px;-webkit-text-stroke:0.22px #ff9f17;">Manutenzione straordinaria</span>
<span class="t" style="left:837.30px;top:443.74px;font-size:11px;color:#ef5350;letter-spacing:0.457px;-webkit-text-stroke:0.22px #ef5350;">Da ricontrollare</span>
<span class="t" style="left:990.50px;top:444.29px;font-size:12px;color:#4f4f4f;letter-spacing:0.468px;">Arezzo</span>
<span class="t" style="left:1084.20px;top:444.29px;font-size:12px;color:#4f4f4f;letter-spacing:0.388px;">Arezzo</span>
<span class="t" style="left:1189.40px;top:444.29px;font-size:12px;color:#4f4f4f;letter-spacing:0.749px;">06/02/2022</span>
<span class="t" style="left:308.30px;top:511.64px;font-size:12px;color:#4f4f4f;letter-spacing:0.453px;">Impianto</span>
<span class="t" style="left:308.30px;top:530.39px;font-size:12px;color:#4f4f4f;letter-spacing:0.505px;">per</span>
<span class="t" style="left:308.30px;top:549.14px;font-size:12px;color:#4f4f4f;letter-spacing:0.560px;">parcheggi</span>
<span class="t" style="left:308.30px;top:567.89px;font-size:12px;color:#4f4f4f;letter-spacing:0.477px;">- Bianchi</span>
<span class="t" style="left:308.30px;top:586.64px;font-size:12px;color:#4f4f4f;letter-spacing:0.078px;">SAS - 1°</span>
<span class="t" style="left:413.50px;top:548.59px;font-size:11px;color:#17998b;letter-spacing:0.254px;-webkit-text-stroke:0.22px #17998b;">Bianchi SAS</span>
<span class="t" style="left:522.50px;top:530.39px;font-size:12px;color:#4f4f4f;letter-spacing:0.460px;">Impianto</span>
<span class="t" style="left:522.50px;top:549.14px;font-size:12px;color:#4f4f4f;letter-spacing:0.505px;">per</span>
<span class="t" style="left:522.50px;top:567.89px;font-size:12px;color:#4f4f4f;letter-spacing:0.573px;">parcheggi</span>
<span class="t" style="left:635.75px;top:548.59px;font-size:11px;color:#26a69a;letter-spacing:0.537px;-webkit-text-stroke:0.22px #26a69a;">Manutenzione ordinaria</span>
<span class="t" style="left:837.30px;top:548.59px;font-size:11px;color:#26a69a;letter-spacing:0.546px;-webkit-text-stroke:0.22px #26a69a;">Programmato</span>
<span class="t" style="left:990.50px;top:549.14px;font-size:12px;color:#4f4f4f;letter-spacing:0.468px;">Arezzo</span>
<span class="t" style="left:1084.20px;top:549.14px;font-size:12px;color:#4f4f4f;letter-spacing:0.388px;">Arezzo</span>
<span class="t" style="left:1189.40px;top:530.39px;font-size:12px;color:#4f4f4f;letter-spacing:0.749px;">28/05/2024</span>
<span class="t" style="left:1189.40px;top:549.14px;font-size:12px;color:#4f4f4f;letter-spacing:0.505px;">-</span>
<span class="t" style="left:1189.40px;top:567.89px;font-size:12px;color:#4f4f4f;letter-spacing:0.749px;">29/05/2024</span>
<span class="t" style="left:308.30px;top:616.49px;font-size:12px;color:#4f4f4f;letter-spacing:0.453px;">Impianto</span>
<span class="t" style="left:308.30px;top:635.24px;font-size:12px;color:#4f4f4f;letter-spacing:0.505px;">per</span>
<span class="t" style="left:308.30px;top:653.99px;font-size:12px;color:#4f4f4f;letter-spacing:0.560px;">parcheggi</span>
<span class="t" style="left:308.30px;top:672.74px;font-size:12px;color:#4f4f4f;letter-spacing:0.477px;">- Bianchi</span>
<span class="t" style="left:308.30px;top:691.49px;font-size:12px;color:#4f4f4f;letter-spacing:0.505px;">SAS - 2°</span>
<span class="t" style="left:413.50px;top:653.44px;font-size:11px;color:#17998b;letter-spacing:0.254px;-webkit-text-stroke:0.22px #17998b;">Bianchi SAS</span>
<span class="t" style="left:522.50px;top:635.24px;font-size:12px;color:#4f4f4f;letter-spacing:0.460px;">Impianto</span>
<span class="t" style="left:522.50px;top:653.99px;font-size:12px;color:#4f4f4f;letter-spacing:0.505px;">per</span>
<span class="t" style="left:522.50px;top:672.74px;font-size:12px;color:#4f4f4f;letter-spacing:0.573px;">parcheggi</span>
<span class="t" style="left:635.75px;top:653.44px;font-size:11px;color:#ff9f17;letter-spacing:0.568px;-webkit-text-stroke:0.22px #ff9f17;">Manutenzione straordinaria</span>
<span class="t" style="left:837.30px;top:653.44px;font-size:11px;color:#ff9f17;letter-spacing:0.443px;-webkit-text-stroke:0.22px #ff9f17;">Da programmare</span>
<span class="t" style="left:990.50px;top:653.99px;font-size:12px;color:#4f4f4f;letter-spacing:0.468px;">Arezzo</span>
<span class="t" style="left:1084.20px;top:653.99px;font-size:12px;color:#4f4f4f;letter-spacing:0.388px;">Arezzo</span>
<span class="t" style="left:1189.40px;top:653.99px;font-size:12px;color:#4f4f4f;letter-spacing:0.749px;">02/01/2024</span>
<span class="t" style="left:308.30px;top:721.34px;font-size:12px;color:#4f4f4f;letter-spacing:0.453px;">Impianto</span>
<span class="t" style="left:308.30px;top:740.09px;font-size:12px;color:#4f4f4f;letter-spacing:0.505px;">per</span>
<span class="t" style="left:308.30px;top:758.84px;font-size:12px;color:#4f4f4f;letter-spacing:0.560px;">parcheggi</span>
<span class="t" style="left:308.30px;top:777.59px;font-size:12px;color:#4f4f4f;letter-spacing:0.477px;">- Bianchi</span>
<span class="t" style="left:308.30px;top:796.34px;font-size:12px;color:#4f4f4f;letter-spacing:0.505px;">SAS - 3°</span>
<span class="t" style="left:413.50px;top:758.29px;font-size:11px;color:#17998b;letter-spacing:0.254px;-webkit-text-stroke:0.22px #17998b;">Bianchi SAS</span>
<span class="t" style="left:522.50px;top:740.09px;font-size:12px;color:#4f4f4f;letter-spacing:0.460px;">Impianto</span>
<span class="t" style="left:522.50px;top:758.84px;font-size:12px;color:#4f4f4f;letter-spacing:0.505px;">per</span>
<span class="t" style="left:522.50px;top:777.59px;font-size:12px;color:#4f4f4f;letter-spacing:0.573px;">parcheggi</span>
<span class="t" style="left:635.75px;top:758.29px;font-size:11px;color:#26a69a;letter-spacing:0.537px;-webkit-text-stroke:0.22px #26a69a;">Manutenzione ordinaria</span>
<span class="t" style="left:837.30px;top:758.29px;font-size:11px;color:#ff9f17;letter-spacing:0.443px;-webkit-text-stroke:0.22px #ff9f17;">Da programmare</span>
<span class="t" style="left:990.50px;top:758.84px;font-size:12px;color:#4f4f4f;letter-spacing:0.468px;">Arezzo</span>
<span class="t" style="left:1084.20px;top:758.84px;font-size:12px;color:#4f4f4f;letter-spacing:0.388px;">Arezzo</span>
<span class="t" style="left:1189.40px;top:758.84px;font-size:12px;color:#4f4f4f;letter-spacing:0.749px;">02/07/2024</span>
<span class="t" style="left:308.30px;top:826.19px;font-size:12px;color:#4f4f4f;letter-spacing:0.453px;">Impianto</span>
<span class="t" style="left:308.30px;top:844.94px;font-size:12px;color:#4f4f4f;letter-spacing:0.505px;">per</span>
<span class="t" style="left:308.30px;top:863.69px;font-size:12px;color:#4f4f4f;letter-spacing:0.560px;">parcheggi</span>
<span class="t" style="left:308.30px;top:882.44px;font-size:12px;color:#4f4f4f;letter-spacing:0.477px;">- Bianchi</span>
<span class="t" style="left:308.30px;top:901.19px;font-size:12px;color:#4f4f4f;letter-spacing:0.505px;">SAS - 4°</span>
<span class="t" style="left:413.50px;top:863.14px;font-size:11px;color:#17998b;letter-spacing:0.254px;-webkit-text-stroke:0.22px #17998b;">Bianchi SAS</span>
<span class="t" style="left:522.50px;top:844.94px;font-size:12px;color:#4f4f4f;letter-spacing:0.460px;">Impianto</span>
<span class="t" style="left:522.50px;top:863.69px;font-size:12px;color:#4f4f4f;letter-spacing:0.505px;">per</span>
<span class="t" style="left:522.50px;top:882.44px;font-size:12px;color:#4f4f4f;letter-spacing:0.573px;">parcheggi</span>
<span class="t" style="left:635.75px;top:863.14px;font-size:11px;color:#26a69a;letter-spacing:0.537px;-webkit-text-stroke:0.22px #26a69a;">Manutenzione ordinaria</span>
<span class="t" style="left:837.30px;top:863.14px;font-size:11px;color:#ff9f17;letter-spacing:0.443px;-webkit-text-stroke:0.22px #ff9f17;">Da programmare</span>
<span class="t" style="left:990.50px;top:863.69px;font-size:12px;color:#4f4f4f;letter-spacing:0.468px;">Arezzo</span>
<span class="t" style="left:1084.20px;top:863.69px;font-size:12px;color:#4f4f4f;letter-spacing:0.388px;">Arezzo</span>
<span class="t" style="left:1189.40px;top:863.69px;font-size:12px;color:#4f4f4f;letter-spacing:0.749px;">31/12/2024</span>
</main>
<aside>
<div style="position:absolute;left:0px;top:45px;width:247.2px;height:871px;background:#fff;"></div>
<div style="position:absolute;left:247.0px;top:45px;width:4.6px;height:871px;background:#f6f5f5;"></div>
<div style="position:absolute;left:251.6px;top:45px;width:1.0px;height:871px;background:#e6e4e4;"></div>
<div style="position:absolute;left:247.0px;top:40px;width:4.8px;height:786.5px;background:#8a93ad;border-radius:2.4px;"></div>
<svg style="left:0.80px;top:45.00px" width="246.40" height="163.00" viewBox="0 0 247 163" preserveAspectRatio="none" class="cave"><defs>
<filter id="bl" x="-30%" y="-30%" width="160%" height="160%"><feGaussianBlur stdDeviation="2.6"/></filter>
<filter id="bs" x="-30%" y="-30%" width="160%" height="160%"><feGaussianBlur stdDeviation="0.9"/></filter>
<filter id="nzd" x="0" y="0" width="100%" height="100%"><feTurbulence type="fractalNoise" baseFrequency="0.22 0.2" numOctaves="3" seed="7"/><feColorMatrix type="matrix" values="0 0 0 0 0.12  0 0 0 0 0.08  0 0 0 0 0.02  4.5 0 0 0 -2.1"/></filter>
<filter id="nzl" x="0" y="0" width="100%" height="100%"><feTurbulence type="fractalNoise" baseFrequency="0.25 0.22" numOctaves="3" seed="31"/><feColorMatrix type="matrix" values="0 0 0 0 1  0 0 0 0 0.94  0 0 0 0 0.78  0 4.2 0 0 -2.2"/></filter>
<filter id="nzv" x="0" y="0" width="100%" height="100%"><feTurbulence type="fractalNoise" baseFrequency="0.4 0.045" numOctaves="2" seed="11"/><feColorMatrix type="matrix" values="0 0 0 0 0.17  0 0 0 0 0.11  0 0 0 0 0.02  2.8 0 0 0 -1.2"/></filter>
<linearGradient id="vfade" x1="0" y1="0" x2="0" y2="1"><stop offset="0" stop-color="#fff"/><stop offset=".45" stop-color="#fff"/><stop offset=".58" stop-color="#000"/></linearGradient>
<mask id="topm"><rect width="247" height="163" fill="url(#vfade)"/></mask>
<clipPath id="cc"><rect x="0" y="0" width="247" height="163"/></clipPath>
</defs>
<g clip-path="url(#cc)">
<g filter="url(#bl)"><rect x="-10" y="-10" width="270" height="100" fill="#605a30"/><rect x="-10" y="88" width="270" height="90" fill="#857046"/><ellipse cx="22" cy="8" rx="30" ry="14" fill="#5c5028"/><ellipse cx="22" cy="30" rx="12" ry="10" fill="#5a7838"/><ellipse cx="47" cy="8" rx="7" ry="16" fill="#b08a4c"/><ellipse cx="8" cy="35" rx="10" ry="20" fill="#475a2c"/><ellipse cx="6" cy="44" rx="8" ry="9" fill="#4a8a68"/><ellipse cx="10" cy="66" rx="9" ry="14" fill="#b49650"/><ellipse cx="30" cy="12" rx="7" ry="12" fill="#7c6434"/><ellipse cx="92" cy="6" rx="36" ry="11" fill="#6f9060"/><ellipse cx="146" cy="8" rx="26" ry="12" fill="#93b496"/><ellipse cx="168" cy="4" rx="12" ry="6" fill="#5a5a3c"/><ellipse cx="110" cy="14" rx="40" ry="7" fill="#7fb58a"/><ellipse cx="118" cy="66" rx="42" ry="13" fill="#dcc988"/><ellipse cx="146" cy="72" rx="20" ry="9" fill="#ecdc98"/><ellipse cx="98" cy="60" rx="18" ry="8" fill="#c4ac74"/><ellipse cx="72" cy="60" rx="12" ry="10" fill="#8c7444"/><ellipse cx="100" cy="56" rx="6" ry="4" fill="#54441c"/><path d="M52 44 C70 26 105 22 135 34 C155 42 168 54 176 70" fill="none" stroke="#1fb45c" stroke-width="21" stroke-linecap="round"/><path d="M62 30 C85 14 120 12 150 20 C168 26 176 40 180 52" fill="none" stroke="#5fa870" stroke-width="13" stroke-linecap="round"/><path d="M108 20 C128 14 150 18 162 30 C168 36 170 42 172 48" fill="none" stroke="#a9d6c4" stroke-width="11" stroke-linecap="round"/><ellipse cx="112" cy="40" rx="26" ry="8" fill="#2cc468"/><ellipse cx="150" cy="52" rx="12" ry="7" fill="#2ab87a" transform="rotate(35 150 52)"/><ellipse cx="222" cy="28" rx="30" ry="38" fill="#6a92ee"/><ellipse cx="238" cy="58" rx="14" ry="26" fill="#84acf8"/><ellipse cx="205" cy="40" rx="10" ry="16" fill="#789cec"/><ellipse cx="191" cy="48" rx="8" ry="10" fill="#9098d0"/><ellipse cx="174" cy="28" rx="6" ry="30" fill="#6e5620"/><ellipse cx="189" cy="32" rx="8" ry="14" fill="#6f8fe0"/><ellipse cx="187" cy="9" rx="7" ry="11" fill="#6a5018"/><ellipse cx="222" cy="8" rx="14" ry="10" fill="#7a5a1c"/><ellipse cx="232" cy="44" rx="5" ry="16" fill="#7a5c22"/><ellipse cx="205" cy="72" rx="12" ry="10" fill="#75581c"/><ellipse cx="180" cy="70" rx="8" ry="12" fill="#8a6c24"/><ellipse cx="36" cy="70" rx="20" ry="8" fill="#86a0bc"/><ellipse cx="71" cy="72" rx="9" ry="10" fill="#48dc5a"/><ellipse cx="72" cy="86" rx="8" ry="5" fill="#40dc60"/><ellipse cx="5" cy="96" rx="5" ry="20" fill="#47a04c"/><ellipse cx="80" cy="88" rx="60" ry="6" fill="#6b7628"/><ellipse cx="140" cy="90" rx="22" ry="7" fill="#6f7a2c"/><ellipse cx="128" cy="84" rx="8" ry="4" fill="#3a8a86"/><ellipse cx="60" cy="108" rx="62" ry="13" fill="#664c24"/><ellipse cx="105" cy="118" rx="24" ry="9" fill="#a88e64"/><ellipse cx="30" cy="100" rx="24" ry="8" fill="#5c4624"/><ellipse cx="216" cy="94" rx="36" ry="13" fill="#85601e"/><ellipse cx="240" cy="100" rx="12" ry="10" fill="#9a7430"/><ellipse cx="174" cy="96" rx="8" ry="5" fill="#d8ccb0"/><ellipse cx="25" cy="146" rx="42" ry="18" fill="#8d7e6c"/><ellipse cx="8" cy="128" rx="16" ry="10" fill="#80705a"/><ellipse cx="60" cy="160" rx="30" ry="8" fill="#857462"/><ellipse cx="95" cy="148" rx="24" ry="14" fill="#80602c"/><ellipse cx="112" cy="132" rx="16" ry="8" fill="#94723c"/><ellipse cx="150" cy="112" rx="16" ry="10" fill="#a98a52"/><ellipse cx="206" cy="118" rx="44" ry="6" fill="#8c7a78"/><ellipse cx="200" cy="140" rx="50" ry="16" fill="#a38d6a"/><ellipse cx="225" cy="150" rx="30" ry="8" fill="#b7a78e" transform="rotate(22 225 150)"/><ellipse cx="168" cy="146" rx="8" ry="20" fill="#9a7030"/><ellipse cx="190" cy="128" rx="22" ry="6" fill="#8a6a38"/></g>
<rect width="247" height="163" filter="url(#nzv)" mask="url(#topm)" opacity=".8"/>
<rect width="247" height="163" filter="url(#nzd)" opacity=".55"/>
<rect width="247" height="163" filter="url(#nzl)" opacity=".2"/>
<g filter="url(#bs)"><path d="M162 115 L136 126 L132 164 L167 164 L166 147 L157 127 Z" fill="#3f4258"/><path d="M214 113 L248 110 L248 115 L222 117 Z" fill="#252e5a"/><path d="M177 93 L181 90 L184 98 L179 101 Z" fill="#e6dcc6"/></g>
<g fill="none" stroke="#8590ac" stroke-width="0.9" opacity=".9"><path d="M122 146 L136 124 L165 103 L186 102 L248 108"/><path d="M163 117 L174 131 L206 164"/><path d="M137 125 V141 M128 137 V164 M173 131 V151 M188 147 V164 M152 112 V120"/><path d="M125 142 L96 163" stroke="#4a64b8" stroke-width="1.2"/></g>
</g></svg>
<div style="position:absolute;left:0px;top:207.8px;width:247.2px;height:3.2px;background:#03a9f4;"></div>
<div style="position:absolute;left:16.9px;top:63.6px;width:46.8px;height:46.8px;background:#1b9ac6;border-radius:50%;"></div>
<svg style="left:221.00px;top:186.60px" width="7.00" height="4.20" viewBox="0 0 7 4.2" preserveAspectRatio="none" ><path d="M0.4 0.5 L3.5 3.6 L6.6 0.5" fill="none" stroke="#fff" stroke-width="1.1"/></svg>
<div style="position:absolute;left:0.8px;top:419px;width:245.8px;height:38.2px;background:#f5f5f5;"></div>
<div style="position:absolute;left:0.8px;top:464.8px;width:245.8px;height:34.8px;background:#f5f5f5;"></div>
<div style="position:absolute;left:209.8px;top:268.9px;width:18.2px;height:18.2px;background:#2196f3;border-radius:50%;"></div>
<div style="position:absolute;left:12.0px;top:309.4px;width:57.3px;height:20.1px;border:1px solid #5a5a5a;border-radius:3.5px;box-sizing:border-box;background:#fff;"></div>
<svg style="left:222.80px;top:357.00px" width="4.40" height="7.60" viewBox="0 0 4.4 7.6" preserveAspectRatio="none" ><path d="M0.6 0.5 L3.8 3.8 L0.6 7.1" fill="none" stroke="#29343a" stroke-width="1.15"/></svg>
<svg style="left:222.80px;top:396.50px" width="4.40" height="7.60" viewBox="0 0 4.4 7.6" preserveAspectRatio="none" ><path d="M0.6 0.5 L3.8 3.8 L0.6 7.1" fill="none" stroke="#29343a" stroke-width="1.15"/></svg>
<svg style="left:221.60px;top:438.20px" width="6.80" height="4.00" viewBox="0 0 6.8 4" preserveAspectRatio="none" ><path d="M0.5 0.5 L3.4 3.4 L6.3 0.5" fill="none" stroke="#29343a" stroke-width="1.15"/></svg>
<svg style="left:222.90px;top:813.80px" width="4.40" height="7.60" viewBox="0 0 4.4 7.6" preserveAspectRatio="none" ><path d="M0.6 0.5 L3.8 3.8 L0.6 7.1" fill="none" stroke="#29343a" stroke-width="1.15"/></svg>
<svg style="left:6.90px;top:418.90px" width="112.80" height="37.00" viewBox="0 0 112.8 37.0" preserveAspectRatio="none" ><ellipse cx="56.4" cy="18.5" rx="54.4" ry="16.5" fill="none" stroke="#e8641c" stroke-width="1.0"/></svg>
<svg style="left:24.10px;top:463.60px" width="112.60" height="37.20" viewBox="0 0 112.6 37.2" preserveAspectRatio="none" ><ellipse cx="56.3" cy="18.6" rx="54.3" ry="16.6" fill="none" stroke="#e8641c" stroke-width="1.0"/></svg>
<svg style="left:19.00px;top:230.30px" width="13.00" height="13.50" viewBox="0 0 13 13.5" preserveAspectRatio="none" ><path d="M6.5 0.3 L12.6 5.6 V13.2 H8.2 V8.9 H4.8 V13.2 H0.4 V5.6 Z" fill="#29343a" stroke="#29343a" stroke-width="0.6" stroke-linejoin="round"/></svg>
<svg style="left:19.00px;top:269.70px" width="12.80" height="14.20" viewBox="0 0 12.8 14.2" preserveAspectRatio="none" ><path d="M6.4 0.6 C3.6 0.6 2.3 2.8 2.3 5.2 V8.3 C2.3 9.3 1.2 9.9 0.7 10.8 H12.1 C11.6 9.9 10.5 9.3 10.5 8.3 V5.2 C10.5 2.8 9.2 0.6 6.4 0.6 Z" fill="none" stroke="#29343a" stroke-width="1.1" stroke-linejoin="round"/><path d="M4.6 11.4 C5 13.9 7.8 13.9 8.2 11.4" fill="none" stroke="#29343a" stroke-width="1.1"/></svg>
<svg style="left:18.50px;top:353.00px" width="13.80" height="12.00" viewBox="0 0 13.8 12" preserveAspectRatio="none" ><rect x="1.0" y="6.4" width="2.7" height="4.9" rx=".5" fill="#29343a"/><rect x="4.9" y="3.2" width="3.0" height="8.1" rx=".5" fill="#29343a"/><rect x="9.1" y="0" width="3.7" height="11.3" rx=".5" fill="#29343a"/><rect x="0" y="10.9" width="13.8" height="1.1" fill="#29343a"/></svg>
<svg style="left:19.20px;top:392.20px" width="13.60" height="13.80" viewBox="0 0 13.6 13.8" preserveAspectRatio="none" ><path d="M0.3 8.8 A8 8 0 0 1 8.3 0.8 V6.3 A2.5 2.5 0 0 0 5.8 8.8 Z" fill="#29343a"/><rect x="9.2" y="0.2" width="1.3" height="6.6" fill="#29343a"/><rect x="10.4" y="0.9" width="3.2" height="1.1" fill="#29343a"/><rect x="10.4" y="4.9" width="3.2" height="1.1" fill="#29343a"/><rect x="0" y="9.6" width="6.4" height="1.2" fill="#29343a"/><rect x="0.5" y="10.6" width="1.1" height="3.2" fill="#29343a"/><rect x="4.7" y="10.6" width="1.1" height="3.2" fill="#29343a"/></svg>
<svg style="left:18.60px;top:431.50px" width="14.00" height="13.60" viewBox="0 0 14 13.6" preserveAspectRatio="none" ><path d="M2.3 11.4 L7.6 6.1" stroke="#29343a" stroke-width="3.3" stroke-linecap="round" fill="none"/><path d="M12.15 3.77 A3 3 0 1 1 10.23 1.85" fill="none" stroke="#29343a" stroke-width="3.5"/></svg>
<svg style="left:37.40px;top:475.50px" width="14.00" height="13.60" viewBox="0 0 14 13.6" preserveAspectRatio="none" ><path d="M2.3 11.4 L7.6 6.1" stroke="#333" stroke-width="3.3" stroke-linecap="round" fill="none"/><path d="M12.15 3.77 A3 3 0 1 1 10.23 1.85" fill="none" stroke="#333" stroke-width="3.5"/></svg>
<svg style="left:17.50px;top:771.90px" width="15.70" height="11.00" viewBox="0 0 15.7 11" preserveAspectRatio="none" ><circle cx="4" cy="2.5" r="2.3" fill="#29343a"/><circle cx="11.7" cy="2.5" r="2.3" fill="#29343a"/><path d="M0 8.2 C0 5.6 1.8 4.6 4 4.6 C5 4.6 5.6 4.9 6 5.2 L4.2 8.2 Z" fill="#29343a"/><path d="M15.7 8.2 C15.7 5.6 13.9 4.6 11.7 4.6 C10.7 4.6 10.1 4.9 9.7 5.2 L11.5 8.2 Z" fill="#29343a"/><circle cx="7.85" cy="5.2" r="3.2" fill="#29343a" stroke="#fff" stroke-width=".8"/><path d="M3.2 11 C3.2 8.9 5.2 8.2 7.85 8.2 C10.5 8.2 12.5 8.9 12.5 11 Z" fill="#29343a" stroke="#fff" stroke-width=".5"/></svg>
<svg style="left:18.30px;top:809.60px" width="14.70" height="13.00" viewBox="0 0 14.7 13" preserveAspectRatio="none" ><path d="M0.5 12.3 C2.5 9 4.6 4 4.4 1.6 C4.3 0.3 3.2 0.5 3 2 C2.7 4.5 2.9 8 3.6 8.6 C4.4 9.2 5.2 6.6 6 6.4 C6.8 6.2 6.6 8.6 7.4 8.6 C8.2 8.6 8.6 7 9.4 7 C10.2 7 10 8.4 11 8.5 L13.8 8.5" fill="none" stroke="#29343a" stroke-width="1.15" stroke-linecap="round" stroke-linejoin="round"/><path d="M0.3 10.4 H14.4" stroke="#29343a" stroke-width="1"/></svg>
<svg style="left:19.60px;top:849.90px" width="11.70" height="11.50" viewBox="0 0 11.7 11.5" preserveAspectRatio="none" ><rect x="0" y="0" width="5.2" height="5.1" rx=".7" fill="#29343a"/><rect x="0" y="6.4" width="5.2" height="5.1" rx=".7" fill="#29343a"/><rect x="6.5" y="0" width="5.2" height="5.1" rx=".7" fill="#29343a"/><rect x="6.5" y="6.4" width="5.2" height="5.1" rx=".7" fill="#29343a"/></svg>
<svg style="left:18.60px;top:889.30px" width="14.10" height="11.70" viewBox="0 0 14.1 11.7" preserveAspectRatio="none" ><rect x="0" y="0" width="14.1" height="11.7" rx="1.2" fill="#29343a"/><path d="M1.6 4 V1.6 H4.4 M9.7 1.6 H12.5 V4 M12.5 7.7 V10.1 H9.7 M4.4 10.1 H1.6 V7.7" fill="none" stroke="#fff" stroke-width=".9"/><rect x="4.0" y="3.4" width="1.5" height="4.9" fill="#fff"/><rect x="6.3" y="3.4" width="1.5" height="4.9" fill="#fff"/><rect x="8.6" y="3.4" width="1.5" height="4.9" fill="#fff"/></svg>
<svg style="left:35.80px;top:512.30px" width="11.90" height="10.50" viewBox="0 0 11.9 10.5" preserveAspectRatio="none" ><rect x="0" y="0" width="11.9" height="2.4" rx=".5" fill="#2b2b2b"/><path d="M0.7 3 H11.2 V9.7 Q11.2 10.5 10.4 10.5 H1.5 Q0.7 10.5 0.7 9.7 Z" fill="#2b2b2b"/><rect x="4.1" y="4.6" width="3.7" height="1" rx=".4" fill="#fff"/></svg>
<svg style="left:35.80px;top:547.30px" width="12.10" height="11.80" viewBox="0 0 12.1 11.8" preserveAspectRatio="none" ><path d="M6.05 0.4 L7.8 4.1 L11.8 4.6 L8.9 7.4 L9.6 11.4 L6.05 9.5 L2.5 11.4 L3.2 7.4 L0.3 4.6 L4.3 4.1 Z" fill="#fff" stroke="#2b2b2b" stroke-width="1" stroke-linejoin="round"/><path d="M6.05 0.4 L6.05 9.5 L2.5 11.4 L3.2 7.4 L0.3 4.6 L4.3 4.1 Z" fill="#2b2b2b" stroke="#2b2b2b" stroke-width="1" stroke-linejoin="round"/></svg>
<svg style="left:36.10px;top:584.40px" width="11.60" height="9.60" viewBox="0 0 11.6 9.6" preserveAspectRatio="none" ><path d="M4.2 1.1 H11.6 M4.2 4.8 H11.6 M4.2 8.5 H11.6" stroke="#2b2b2b" stroke-width="1.5"/><path d="M0.2 1.2 L1.1 2.1 L2.7 0.3 M0.2 4.9 L1.1 5.8 L2.7 4" stroke="#2b2b2b" stroke-width=".9" fill="none"/><circle cx="1.3" cy="8.5" r=".9" fill="#2b2b2b"/></svg>
<svg style="left:35.80px;top:619.30px" width="11.60" height="11.60" viewBox="0 0 11.6 11.6" preserveAspectRatio="none" ><circle cx="5.8" cy="5.8" r="5.8" fill="#2b2b2b"/><path d="M3 6 L5 8 L8.8 4" stroke="#fff" stroke-width="1.5" fill="none" stroke-linecap="round" stroke-linejoin="round"/></svg>
<svg style="left:35.80px;top:654.30px" width="9.30" height="12.30" viewBox="0 0 9.3 12.3" preserveAspectRatio="none" ><rect x="0" y="1.5" width="9.3" height="10.8" rx="1" fill="#2b2b2b"/><rect x="2.8" y="0.5" width="3.7" height="2.4" rx=".8" fill="#2b2b2b"/><circle cx="4.65" cy="1" r="1" fill="#2b2b2b"/><path d="M2.3 7.2 L4 8.9 L7.1 5.4" stroke="#fff" stroke-width="1.3" fill="none" stroke-linecap="round" stroke-linejoin="round"/></svg>
<svg style="left:35.80px;top:690.10px" width="14.90" height="11.90" viewBox="0 0 14.9 11.9" preserveAspectRatio="none" ><path d="M0.8 0 H8.6 Q9.4 0 9.4 .8 V2.3 H11.6 L14.3 5.2 V8.6 H14.9 V9.8 H0 V.8 Q0 0 .8 0 Z" fill="#2b2b2b"/><path d="M10.4 3.4 H11.3 L13.1 5.4 H10.4 Z" fill="#fff"/><path d="M4.7 2 V6.6 M2.4 4.3 H7" stroke="#fff" stroke-width="1.4"/><circle cx="3.6" cy="9.8" r="2.1" fill="#2b2b2b" stroke="#fff" stroke-width=".7"/><circle cx="11.3" cy="9.8" r="2.1" fill="#2b2b2b" stroke="#fff" stroke-width=".7"/><circle cx="3.6" cy="9.8" r=".8" fill="#fff"/><circle cx="11.3" cy="9.8" r=".8" fill="#fff"/></svg>
<svg style="left:35.80px;top:726.00px" width="10.50" height="11.90" viewBox="0 0 10.5 11.9" preserveAspectRatio="none" ><rect x="0" y="1.4" width="10.5" height="10.5" rx="1" fill="#2b2b2b"/><rect x="2" y="0" width="1.5" height="2.6" rx=".5" fill="#2b2b2b"/><rect x="7" y="0" width="1.5" height="2.6" rx=".5" fill="#2b2b2b"/><rect x="0" y="4" width="10.5" height=".9" fill="#fff"/><path d="M3.6 6.7 L6.9 10 M6.9 6.7 L3.6 10" stroke="#fff" stroke-width="1.3" stroke-linecap="round"/></svg>
<span class="t" style="left:-159.60px;width:400px;text-align:center;top:77.28px;font-size:14.5px;color:#fff;">AB</span>
<span class="t" style="left:17.80px;top:110.82px;font-size:13.5px;color:#fff;font-weight:700;letter-spacing:0.137px;text-shadow:0 1px 2px rgba(0,0,0,.6);">Amministratore Paolo Bianchi</span>
<span class="t" style="left:17.80px;top:131.86px;font-size:10.5px;color:#fff;letter-spacing:0.738px;text-shadow:0 0 2px rgba(0,0,0,.3);">Amministratore</span>
<span class="t" style="left:17.60px;top:178.32px;font-size:11.5px;color:#fff;letter-spacing:0.596px;">Il mio account</span>
<span class="t" style="left:50.20px;top:227.57px;font-size:12.5px;color:#29343a;letter-spacing:0.305px;-webkit-text-stroke:0.45px #29343a;">Dashboard</span>
<span class="t" style="left:50.20px;top:266.57px;font-size:12.5px;color:#29343a;letter-spacing:0.582px;-webkit-text-stroke:0.45px #29343a;">Notifiche</span>
<span class="t" style="left:50.20px;top:348.97px;font-size:12.5px;color:#29343a;letter-spacing:0.513px;-webkit-text-stroke:0.45px #29343a;">Statistiche</span>
<span class="t" style="left:50.20px;top:388.57px;font-size:12.5px;color:#29343a;letter-spacing:0.374px;-webkit-text-stroke:0.45px #29343a;">Impianti</span>
<span class="t" style="left:50.20px;top:427.87px;font-size:12.5px;color:#29343a;letter-spacing:0.553px;-webkit-text-stroke:0.45px #29343a;">Interventi</span>
<span class="t" style="left:50.20px;top:766.67px;font-size:12.5px;color:#29343a;letter-spacing:0.504px;-webkit-text-stroke:0.45px #29343a;">Dipendenti</span>
<span class="t" style="left:50.20px;top:806.17px;font-size:12.5px;color:#29343a;letter-spacing:0.594px;-webkit-text-stroke:0.45px #29343a;">Contratti</span>
<span class="t" style="left:50.20px;top:845.27px;font-size:12.5px;color:#29343a;letter-spacing:0.479px;-webkit-text-stroke:0.45px #29343a;">Tipologie</span>
<span class="t" style="left:50.20px;top:884.57px;font-size:12.5px;color:#29343a;letter-spacing:0.414px;-webkit-text-stroke:0.45px #29343a;">Crea prodotto</span>
<span class="t" style="left:18.90px;width:400px;text-align:center;top:268.01px;font-size:9.5px;color:#fff;font-weight:700;">0</span>
<span class="t" style="left:17.60px;top:309.54px;font-size:10px;color:#222;letter-spacing:0.365px;-webkit-text-stroke:0.3px #222;">IMPIANTI</span>
<span class="t" style="left:69.00px;top:471.74px;font-size:12px;color:#454545;letter-spacing:0.538px;">Interventi</span>
<span class="t" style="left:69.00px;top:507.54px;font-size:12px;color:#454545;letter-spacing:0.288px;">Chiuso</span>
<span class="t" style="left:69.00px;top:543.34px;font-size:12px;color:#454545;letter-spacing:0.371px;">In pending</span>
<span class="t" style="left:69.00px;top:579.04px;font-size:12px;color:#454545;letter-spacing:0.420px;">Programmato</span>
<span class="t" style="left:69.00px;top:614.84px;font-size:12px;color:#454545;letter-spacing:0.439px;">Concluso da operatore</span>
<span class="t" style="left:69.00px;top:650.44px;font-size:12px;color:#454545;letter-spacing:0.368px;">Da ricontrollare</span>
<span class="t" style="left:69.00px;top:686.14px;font-size:12px;color:#454545;letter-spacing:0.383px;">da rifissare</span>
<span class="t" style="left:69.00px;top:721.94px;font-size:12px;color:#454545;letter-spacing:0.377px;">Da programmare</span>
</aside>
<header>
<div style="position:absolute;left:0px;top:0px;width:1600px;height:45.2px;background:#fff;box-shadow:0 1px 4px rgba(0,0,0,.16);"></div>
<svg style="left:266.80px;top:17.00px" width="10.20" height="9.60" viewBox="0 0 10.2 9.6" preserveAspectRatio="none" ><path d="M0 0.9 H10.2 M0 4.8 H10.2 M0 8.7 H10.2" stroke="#2b2b2b" stroke-width="1.7"/></svg>
<div style="position:absolute;left:356.5px;top:42.6px;width:76.5px;height:2.6px;background:#1e88e5;"></div>
<svg style="left:356.30px;top:5.00px" width="73.60" height="35.00" viewBox="0 0 73.6 35.0" preserveAspectRatio="none" ><ellipse cx="36.8" cy="17.5" rx="34.8" ry="15.5" fill="none" stroke="#e8641c" stroke-width="1.0"/></svg>
<svg style="left:1570.40px;top:16.00px" width="10.60" height="11.80" viewBox="0 0 12.8 14.2" preserveAspectRatio="none" ><path d="M6.4 0.6 C3.6 0.6 2.3 2.8 2.3 5.2 V8.3 C2.3 9.3 1.2 9.9 0.7 10.8 H12.1 C11.6 9.9 10.5 9.3 10.5 8.3 V5.2 C10.5 2.8 9.2 0.6 6.4 0.6 Z" fill="none" stroke="#333" stroke-width="1.15" stroke-linejoin="round"/><path d="M4.6 11.4 C5 13.9 7.8 13.9 8.2 11.4" fill="none" stroke="#333" stroke-width="1.15"/></svg>
<div style="position:absolute;left:1578px;top:3.8px;width:18px;height:18px;background:#3fa0f0;border-radius:50%;"></div>
<span class="t" style="left:14.10px;top:12.74px;font-size:17.5px;color:#ff6f2c;transform-origin:0 0;transform:scaleX(1.2);clip-path:inset(0 0 0 3.35px);-webkit-text-stroke:0.3px #ff6f2c;">E</span>
<span class="t" style="left:27.60px;top:12.74px;font-size:17.5px;color:#ff6f2c;letter-spacing:0.417px;-webkit-text-stroke:0.45px #ff6f2c;">mmet</span>
<span class="t" style="left:75.80px;top:12.74px;font-size:17.5px;color:#ff915e;letter-spacing:1.179px;">Solution</span>
<span class="t" style="left:307.50px;top:12.74px;font-size:12px;color:#333;letter-spacing:0.495px;">Home</span>
<span class="t" style="left:372.00px;top:12.74px;font-size:12px;color:#333;letter-spacing:0.496px;">Impianti</span>
<span class="t" style="left:448.80px;top:12.74px;font-size:12px;color:#333;letter-spacing:-0.564px;">CRM</span>
<span class="t" style="left:506.30px;top:12.74px;font-size:12px;color:#333;letter-spacing:0.692px;">Prodotti</span>
<span class="t" style="left:582.50px;top:12.74px;font-size:12px;color:#333;letter-spacing:0.630px;">Contabilita</span>
<span class="t" style="left:676.30px;top:12.74px;font-size:12px;color:#333;letter-spacing:0.625px;">Documents</span>
<span class="t" style="left:772.50px;top:12.74px;font-size:12px;color:#333;letter-spacing:0.538px;">Gestione</span>
<span class="t" style="left:1387.00px;width:400px;text-align:center;top:2.81px;font-size:9.5px;color:#fff;font-weight:700;">0</span>
</header>
</body></html>
